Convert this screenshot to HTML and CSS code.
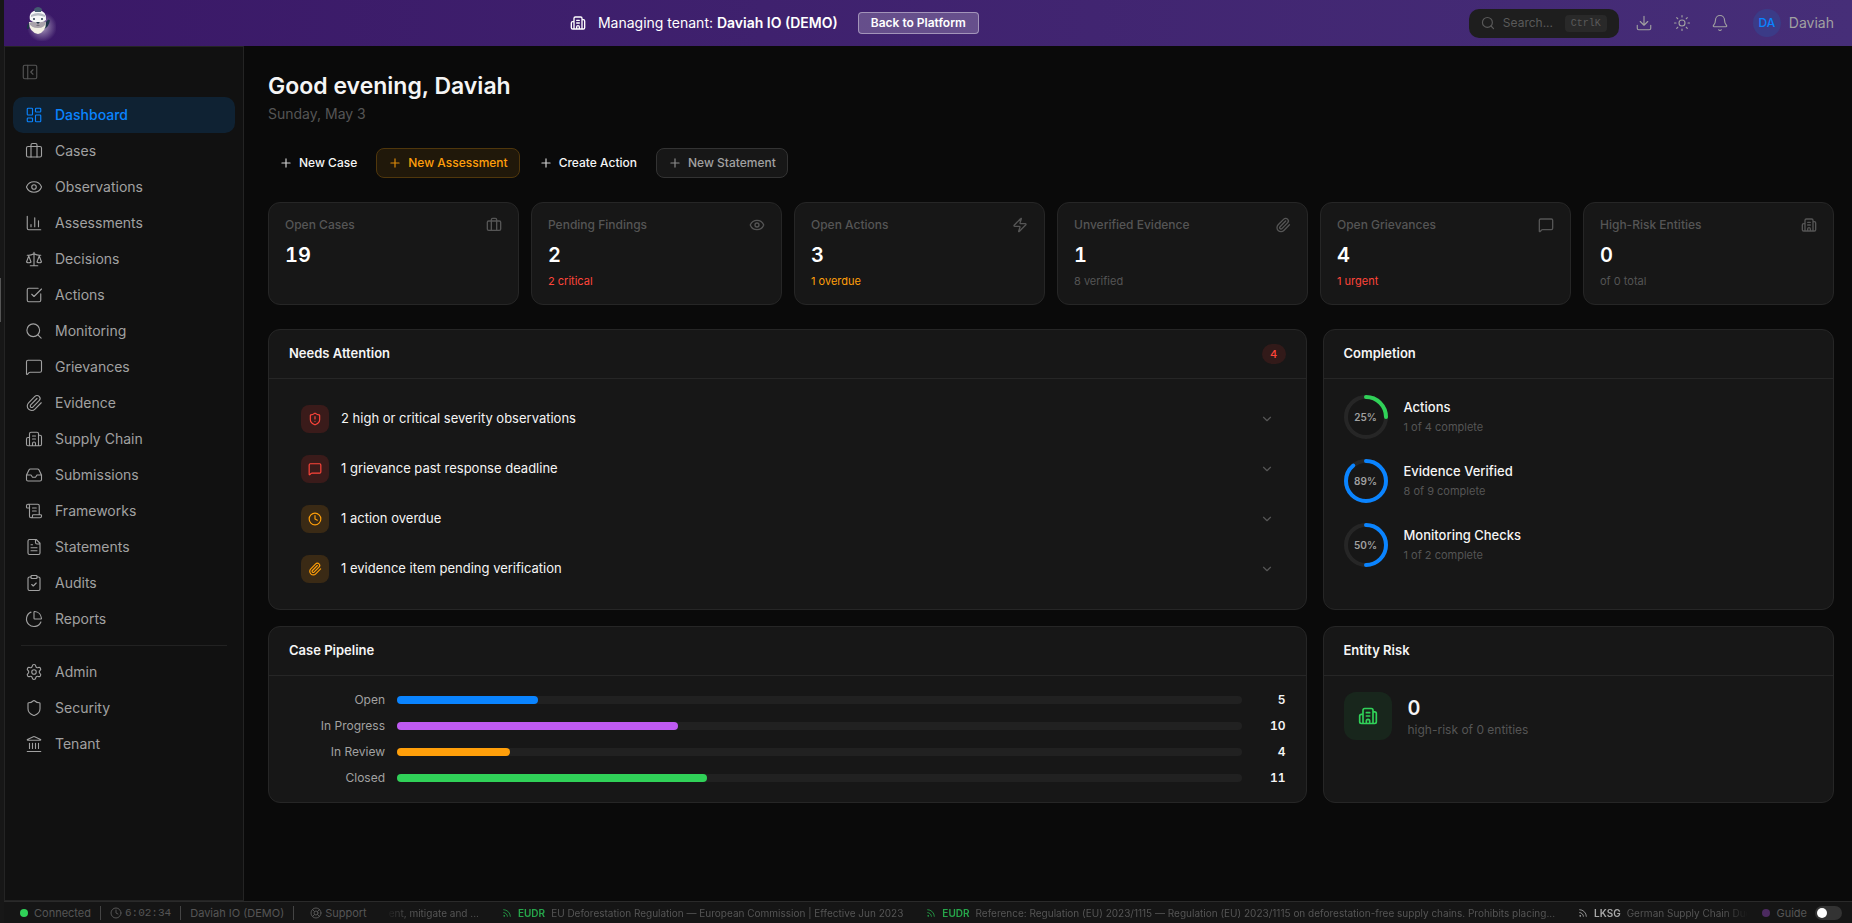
FILE: index.html
```
<!DOCTYPE html>
<html lang="en">
<head>
<meta charset="utf-8">
<title>Dashboard</title>
<link rel="stylesheet" href="styles.css">
</head>
<body>
<svg class="sprite" aria-hidden="true">
  <symbol id="dashboard" viewBox="0 0 24 24"><rect x="3" y="3" width="7" height="9" rx="1"/><rect x="14" y="3" width="7" height="5" rx="1"/><rect x="14" y="12" width="7" height="9" rx="1"/><rect x="3" y="16" width="7" height="5" rx="1"/></symbol>
  <symbol id="briefcase" viewBox="0 0 24 24"><path d="M16 20V4a2 2 0 0 0-2-2h-4a2 2 0 0 0-2 2v16"/><rect x="2" y="6" width="20" height="14" rx="2"/></symbol>
  <symbol id="eye" viewBox="0 0 24 24"><path d="M2.062 12.348a1 1 0 0 1 0-.696 10.75 10.75 0 0 1 19.876 0 1 1 0 0 1 0 .696 10.75 10.75 0 0 1-19.876 0"/><circle cx="12" cy="12" r="3"/></symbol>
  <symbol id="chart" viewBox="0 0 24 24"><path d="M3 3v16a2 2 0 0 0 2 2h16M18 17V9M13 17V5M8 17v-3"/></symbol>
  <symbol id="scale" viewBox="0 0 24 24"><path d="m16 16 3-8 3 8c-.87.65-1.92 1-3 1s-2.13-.35-3-1ZM2 16l3-8 3 8c-.87.65-1.92 1-3 1s-2.13-.35-3-1ZM7 21h10M12 3v18M3 7h2c2 0 5-1 7-2 2 1 5 2 7 2h2"/></symbol>
  <symbol id="check" viewBox="0 0 24 24"><path d="M21 10.5V19a2 2 0 0 1-2 2H5a2 2 0 0 1-2-2V5a2 2 0 0 1 2-2h12.5M9 11l3 3L22 4"/></symbol>
  <symbol id="search" viewBox="0 0 24 24"><circle cx="11" cy="11" r="8.500"/><path d="m21.500 21.500-4.300-4.300"/></symbol>
  <symbol id="message" viewBox="0 0 24 24"><path d="M22 17a2 2 0 0 1-2 2H6.828a2 2 0 0 0-1.414.586l-2.202 2.202A.71.71 0 0 1 2 21.286V5a2 2 0 0 1 2-2h16a2 2 0 0 1 2 2z"/></symbol>
  <symbol id="clip" viewBox="0 0 24 24"><path d="m16 6-8.414 8.586a2 2 0 0 0 2.829 2.829l8.414-8.586a4 4 0 1 0-5.657-5.657l-8.379 8.551a6 6 0 1 0 8.485 8.485l8.379-8.551"/></symbol>
  <symbol id="building" viewBox="0 0 24 24"><path d="M10 12h4M10 8h4M14 21v-3a2 2 0 0 0-4 0v3M6 10H4a2 2 0 0 0-2 2v7a2 2 0 0 0 2 2h16a2 2 0 0 0 2-2V9a2 2 0 0 0-2-2h-2M6 21V5a2 2 0 0 1 2-2h8a2 2 0 0 1 2 2v16"/></symbol>
  <symbol id="inbox" viewBox="0 0 24 24"><path d="M22 12h-6l-2 3h-4l-2-3H2M5.450 5.110 2 12v6a2 2 0 0 0 2 2h16a2 2 0 0 0 2-2v-6l-3.450-6.890A2 2 0 0 0 16.760 4H7.240a2 2 0 0 0-1.790 1.110z"/></symbol>
  <symbol id="scroll" viewBox="0 0 24 24"><path d="M15 12h-5M15 8h-5M19 17V5a2 2 0 0 0-2-2H4M8 21h12a2 2 0 0 0 2-2v-1a1 1 0 0 0-1-1H11a1 1 0 0 0-1 1v1a2 2 0 1 1-4 0V5a2 2 0 1 0-4 0v2a1 1 0 0 0 1 1h3"/></symbol>
  <symbol id="file" viewBox="0 0 24 24"><path d="M15 2H6a2 2 0 0 0-2 2v16a2 2 0 0 0 2 2h12a2 2 0 0 0 2-2V7ZM14 2v4a2 2 0 0 0 2 2h4M10 9H8M16 13H8M16 17H8"/></symbol>
  <symbol id="clipboard" viewBox="0 0 24 24"><rect x="8" y="2" width="8" height="4" rx="1"/><path d="M16 4h2a2 2 0 0 1 2 2v14a2 2 0 0 1-2 2H6a2 2 0 0 1-2-2V6a2 2 0 0 1 2-2h2M9 14l2 2 4-4"/></symbol>
  <symbol id="pie" viewBox="0 0 24 24"><path d="M21 12c.552 0 1.005-.449.950-.998a10 10 0 0 0-8.953-8.951c-.550-.055-.998.398-.998.950v8a1 1 0 0 0 1 1zM21.210 15.890A10 10 0 1 1 8 2.830"/></symbol>
  <symbol id="gear" viewBox="0 0 24 24"><path d="M9.671 4.136a2.340 2.340 0 0 1 4.659 0 2.340 2.340 0 0 0 3.319 1.915 2.340 2.340 0 0 1 2.330 4.033 2.340 2.340 0 0 0 0 3.831 2.340 2.340 0 0 1-2.330 4.033 2.340 2.340 0 0 0-3.319 1.915 2.340 2.340 0 0 1-4.659 0 2.340 2.340 0 0 0-3.320-1.915 2.340 2.340 0 0 1-2.330-4.033 2.340 2.340 0 0 0 0-3.831A2.340 2.340 0 0 1 6.350 6.051a2.340 2.340 0 0 0 3.319-1.915"/><circle cx="12" cy="12" r="3"/></symbol>
  <symbol id="shield" viewBox="0 0 24 24"><path d="M20 13c0 5-3.500 7.500-7.660 8.950a1 1 0 0 1-.670-.010C7.500 20.500 4 18 4 13V6a1 1 0 0 1 1-1c2 0 4.500-1.200 6.240-2.720a1.170 1.170 0 0 1 1.520 0C14.510 3.810 17 5 19 5a1 1 0 0 1 1 1z"/></symbol>
  <symbol id="shield-alert" viewBox="0 0 24 24"><path d="M20 13c0 5-3.500 7.500-7.660 8.950a1 1 0 0 1-.670-.010C7.500 20.500 4 18 4 13V6a1 1 0 0 1 1-1c2 0 4.500-1.200 6.240-2.720a1.170 1.170 0 0 1 1.520 0C14.510 3.810 17 5 19 5a1 1 0 0 1 1 1zM12 8v4M12 16h.010"/></symbol>
  <symbol id="landmark" viewBox="0 0 24 24"><path d="M10 18v-7M11.120 2.198a2 2 0 0 1 1.760.006l7.866 3.847c.476.233.310.949-.220.949H3.474c-.530 0-.695-.716-.220-.949zM14 18v-7M18 18v-7M3 22h18M6 18v-7"/></symbol>
  <symbol id="zap" viewBox="0 0 24 24"><path d="M4 14a1 1 0 0 1-.780-1.630l9.900-10.200a.5.5 0 0 1 .860.460l-1.920 6.020A1 1 0 0 0 13 10h7a1 1 0 0 1 .780 1.630l-9.900 10.200a.5.5 0 0 1-.860-.460l1.920-6.020A1 1 0 0 0 11 14z"/></symbol>
  <symbol id="clock" viewBox="0 0 24 24"><circle cx="12" cy="12" r="10"/><path d="M12 6v6l4 2"/></symbol>
  <symbol id="panel" viewBox="0 0 24 24"><rect x="3" y="3" width="18" height="18" rx="2"/><path d="M9 3v18M16 15l-3-3 3-3"/></symbol>
  <symbol id="download" viewBox="0 0 24 24"><path d="M12 15V3M21 15v4a2 2 0 0 1-2 2H5a2 2 0 0 1-2-2v-4M7 10l5 5 5-5"/></symbol>
  <symbol id="sun" viewBox="0 0 24 24"><circle cx="12" cy="12" r="4"/><path d="M12 2v2M12 20v2M4.930 4.930l1.410 1.410M17.660 17.660l1.410 1.410M2 12h2M20 12h2M6.340 17.660l-1.410 1.410M19.070 4.930l-1.410 1.410"/></symbol>
  <symbol id="bell" viewBox="0 0 24 24"><path d="M10.268 21a2 2 0 0 0 3.464 0M3.262 15.326A1 1 0 0 0 4 17h16a1 1 0 0 0 .740-1.673C19.410 13.956 18 12.499 18 8A6 6 0 0 0 6 8c0 4.499-1.411 5.956-2.738 7.326"/></symbol>
  <symbol id="plus" viewBox="0 0 24 24"><path d="M5 12h14M12 5v14"/></symbol>
  <symbol id="chevron" viewBox="0 0 24 24"><path d="m6 9 6 6 6-6"/></symbol>
  <symbol id="buoy" viewBox="0 0 24 24"><circle cx="12" cy="12" r="10"/><circle cx="12" cy="12" r="4"/><path d="m4.930 4.930 4.240 4.240M14.830 9.170l4.240-4.240M14.830 14.830l4.240 4.240M9.170 14.830l-4.240 4.240"/></symbol>
  <symbol id="rss" viewBox="0 0 24 24"><path d="M4 11a9 9 0 0 1 9 9M4 4a16 16 0 0 1 16 16"/><circle cx="5" cy="19" r="1"/></symbol>
</svg>

<div class="app">
  <div class="edge" aria-hidden="true"><span class="edge-thumb"></span></div>
  <div class="shell">
    <header class="topbar">
      <a class="logo" href="#" aria-label="Home">
        <svg width="32" height="36" viewBox="0 0 32 36" aria-hidden="true">
          <defs><radialGradient id="glow"><stop offset="0" stop-color="#fff" stop-opacity=".6"/><stop offset=".5" stop-color="#fff" stop-opacity=".28"/><stop offset="1" stop-color="#fff" stop-opacity="0"/></radialGradient></defs>
          <circle cx="18" cy="22" r="15" fill="url(#glow)"/>
          <path d="M4 24q-1-4 3-6M20 19q3-1 5-4-1 6-5 8z" fill="#1d3348" stroke="#1d3348" stroke-width="2"/>
          <path d="M5 17q0 10 9 12 8-2 8-12z" fill="#f3f0e4"/>
          <path d="M5 18q8-4 17-1-1 6-8 6t-9-5z" fill="#a9a2ab"/>
          <path d="M6 15q-2-9 8-10 9 1 8 10-4 3-8 2-4 1-8-2z" fill="#f6f7f8"/>
          <path d="M7 10q7-4 14 0v2q-7-3-14 0z" fill="#b7bcc4"/>
          <path d="M10 4q4-4 8 0l-1 3h-6z" fill="#445b70"/>
          <circle cx="10" cy="14" r="1" fill="#26394b"/><circle cx="18" cy="14" r="1" fill="#26394b"/>
          <path d="M12 17h4l-2 2z" fill="#26394b"/>
          <path d="M12 21q2-3 4 0z" fill="#77717b"/>
        </svg>
      </a>
      <div class="tenant">
        <svg class="icon s16"><use href="#building"/></svg>
        <span>Managing tenant: <strong>Daviah IO (DEMO)</strong></span>
        <button class="back" type="button">Back to Platform</button>
      </div>
      <div class="tools">
        <label class="search">
          <svg class="icon s14"><use href="#search"/></svg>
          <input type="text" placeholder="Search..." aria-label="Search">
          <kbd>CtrlK</kbd>
        </label>
        <button class="tool" type="button" aria-label="Download"><svg class="icon s18"><use href="#download"/></svg></button>
        <button class="tool" type="button" aria-label="Theme"><svg class="icon s18"><use href="#sun"/></svg></button>
        <button class="tool" type="button" aria-label="Notifications"><svg class="icon s18"><use href="#bell"/></svg></button>
        <button class="user" type="button"><span class="avatar">DA</span><span>Daviah</span></button>
      </div>
    </header>

    <div class="middle">
      <aside class="sidebar">
        <button class="collapse" type="button" aria-label="Collapse sidebar"><svg class="icon s18"><use href="#panel"/></svg></button>
        <nav class="nav">
          <a class="nav-item active" href="#"><svg class="icon s18"><use href="#dashboard"/></svg>Dashboard</a>
          <a class="nav-item" href="#"><svg class="icon s18"><use href="#briefcase"/></svg>Cases</a>
          <a class="nav-item" href="#"><svg class="icon s18"><use href="#eye"/></svg>Observations</a>
          <a class="nav-item" href="#"><svg class="icon s18"><use href="#chart"/></svg>Assessments</a>
          <a class="nav-item" href="#"><svg class="icon s18"><use href="#scale"/></svg>Decisions</a>
          <a class="nav-item" href="#"><svg class="icon s18"><use href="#check"/></svg>Actions</a>
          <a class="nav-item" href="#"><svg class="icon s18"><use href="#search"/></svg>Monitoring</a>
          <a class="nav-item" href="#"><svg class="icon s18"><use href="#message"/></svg>Grievances</a>
          <a class="nav-item" href="#"><svg class="icon s18"><use href="#clip"/></svg>Evidence</a>
          <a class="nav-item" href="#"><svg class="icon s18"><use href="#building"/></svg>Supply Chain</a>
          <a class="nav-item" href="#"><svg class="icon s18"><use href="#inbox"/></svg>Submissions</a>
          <a class="nav-item" href="#"><svg class="icon s18"><use href="#scroll"/></svg>Frameworks</a>
          <a class="nav-item" href="#"><svg class="icon s18"><use href="#file"/></svg>Statements</a>
          <a class="nav-item" href="#"><svg class="icon s18"><use href="#clipboard"/></svg>Audits</a>
          <a class="nav-item" href="#"><svg class="icon s18"><use href="#pie"/></svg>Reports</a>
          <hr class="nav-rule">
          <a class="nav-item" href="#"><svg class="icon s18"><use href="#gear"/></svg>Admin</a>
          <a class="nav-item" href="#"><svg class="icon s18"><use href="#shield"/></svg>Security</a>
          <a class="nav-item" href="#"><svg class="icon s18"><use href="#landmark"/></svg>Tenant</a>
        </nav>
      </aside>

      <main class="content">
        <div class="greeting">
          <h1>Good evening, Daviah</h1>
          <p>Sunday, May 3</p>
        </div>

        <div class="actions">
          <button class="action" type="button"><svg class="icon s14"><use href="#plus"/></svg>New Case</button>
          <button class="action amber" type="button"><svg class="icon s14"><use href="#plus"/></svg>New Assessment</button>
          <button class="action" type="button"><svg class="icon s14"><use href="#plus"/></svg>Create Action</button>
          <button class="action outline" type="button"><svg class="icon s14"><use href="#plus"/></svg>New Statement</button>
        </div>

        <section class="stats">
          <article class="stat"><div class="stat-head">Open Cases<svg class="icon s16"><use href="#briefcase"/></svg></div><div class="stat-value">19</div></article>
          <article class="stat"><div class="stat-head">Pending Findings<svg class="icon s16"><use href="#eye"/></svg></div><div class="stat-value">2</div><div class="stat-sub red">2 critical</div></article>
          <article class="stat"><div class="stat-head">Open Actions<svg class="icon s16"><use href="#zap"/></svg></div><div class="stat-value">3</div><div class="stat-sub orange">1 overdue</div></article>
          <article class="stat"><div class="stat-head">Unverified Evidence<svg class="icon s16"><use href="#clip"/></svg></div><div class="stat-value">1</div><div class="stat-sub">8 verified</div></article>
          <article class="stat"><div class="stat-head">Open Grievances<svg class="icon s16"><use href="#message"/></svg></div><div class="stat-value">4</div><div class="stat-sub red">1 urgent</div></article>
          <article class="stat"><div class="stat-head">High-Risk Entities<svg class="icon s16"><use href="#building"/></svg></div><div class="stat-value">0</div><div class="stat-sub">of 0 total</div></article>
        </section>

        <div class="panels">
          <section class="panel">
            <header class="panel-head"><h2>Needs Attention</h2><span class="badge">4</span></header>
            <div class="panel-body alerts">
              <button class="alert" type="button"><span class="alert-icon red"><svg class="icon s14"><use href="#shield-alert"/></svg></span><span class="alert-text">2 high or critical severity observations</span><svg class="icon s14 chev"><use href="#chevron"/></svg></button>
              <button class="alert" type="button"><span class="alert-icon red"><svg class="icon s14"><use href="#message"/></svg></span><span class="alert-text">1 grievance past response deadline</span><svg class="icon s14 chev"><use href="#chevron"/></svg></button>
              <button class="alert" type="button"><span class="alert-icon orange"><svg class="icon s14"><use href="#clock"/></svg></span><span class="alert-text">1 action overdue</span><svg class="icon s14 chev"><use href="#chevron"/></svg></button>
              <button class="alert" type="button"><span class="alert-icon orange"><svg class="icon s14"><use href="#clip"/></svg></span><span class="alert-text">1 evidence item pending verification</span><svg class="icon s14 chev"><use href="#chevron"/></svg></button>
            </div>
          </section>

          <section class="panel">
            <header class="panel-head"><h2>Completion</h2></header>
            <div class="panel-body rings">
              <div class="ring-row">
                <div class="ring"><svg viewBox="0 0 44 44"><circle class="track" cx="22" cy="22" r="20"/><circle class="arc green" cx="22" cy="22" r="20" pathLength="100" stroke-dasharray="25 100"/></svg><span>25%</span></div>
                <div><h3>Actions</h3><p>1 of 4 complete</p></div>
              </div>
              <div class="ring-row">
                <div class="ring"><svg viewBox="0 0 44 44"><circle class="track" cx="22" cy="22" r="20"/><circle class="arc blue" cx="22" cy="22" r="20" pathLength="100" stroke-dasharray="89 100"/></svg><span>89%</span></div>
                <div><h3>Evidence Verified</h3><p>8 of 9 complete</p></div>
              </div>
              <div class="ring-row">
                <div class="ring"><svg viewBox="0 0 44 44"><circle class="track" cx="22" cy="22" r="20"/><circle class="arc blue" cx="22" cy="22" r="20" pathLength="100" stroke-dasharray="50 100"/></svg><span>50%</span></div>
                <div><h3>Monitoring Checks</h3><p>1 of 2 complete</p></div>
              </div>
            </div>
          </section>

          <section class="panel">
            <header class="panel-head"><h2>Case Pipeline</h2></header>
            <div class="panel-body pipeline">
              <div class="pipe"><span class="pipe-label">Open</span><div class="bar"><div class="fill blue" style="width:16.670%"></div></div><span class="pipe-count">5</span></div>
              <div class="pipe"><span class="pipe-label">In Progress</span><div class="bar"><div class="fill purple" style="width:33.330%"></div></div><span class="pipe-count">10</span></div>
              <div class="pipe"><span class="pipe-label">In Review</span><div class="bar"><div class="fill orange" style="width:13.330%"></div></div><span class="pipe-count">4</span></div>
              <div class="pipe"><span class="pipe-label">Closed</span><div class="bar"><div class="fill green" style="width:36.670%"></div></div><span class="pipe-count">11</span></div>
            </div>
          </section>

          <section class="panel">
            <header class="panel-head"><h2>Entity Risk</h2></header>
            <div class="panel-body entity">
              <span class="entity-icon"><svg class="icon s20"><use href="#building"/></svg></span>
              <div><div class="entity-value">0</div><p class="entity-sub">high-risk of 0 entities</p></div>
            </div>
          </section>
        </div>
      </main>
    </div>

    <footer class="status">
      <span class="status-item conn"><i class="dot"></i>Connected</span>
      <span class="status-item"><svg class="icon s12"><use href="#clock"/></svg><time>6:02:34</time></span>
      <span class="status-item">Daviah IO (DEMO)</span>
      <a class="status-item support" href="#"><svg class="icon s12"><use href="#buoy"/></svg>Support</a>
      <div class="ticker">
        <span class="news">ent, mitigate and ...</span>
        <span class="news"><svg class="icon s10 eudr"><use href="#rss"/></svg><b class="eudr">EUDR</b>EU Deforestation Regulation — European Commission | Effective Jun 2023</span>
        <span class="news"><svg class="icon s10 eudr"><use href="#rss"/></svg><b class="eudr">EUDR</b>Reference: Regulation (EU) 2023/1115 — Regulation (EU) 2023/1115 on deforestation-free supply chains. Prohibits placing...</span>
        <span class="news"><svg class="icon s10 lksg"><use href="#rss"/></svg><b class="lksg">LKSG</b>German Supply Chain Due</span>
      </div>
      <label class="guide"><i class="dot violet"></i>Guide<input type="checkbox" class="toggle"></label>
    </footer>
  </div>
</div>
</body>
</html>
```

FILE: styles.css
```
* { box-sizing: border-box; }

body {
  margin: 0;
  background: #0a0a0a;
  color: #f5f5f5;
  font-family: Inter, "Liberation Sans", sans-serif;
  font-size: 13px;
  line-height: 20px;
}

h1, h2, h3, p { margin: 0; }
button { font: inherit; color: inherit; background: none; border: 0; padding: 0; margin: 0; }
a { color: inherit; text-decoration: none; }

.sprite { display: none; }
.icon { fill: none; stroke: currentColor; stroke-width: 2; stroke-linecap: round; stroke-linejoin: round; flex: none; }
.s10 { width: 10px; height: 10px; }
.s12 { width: 12px; height: 12px; }
.s14 { width: 14px; height: 14px; }
.s16 { width: 16px; height: 16px; }
.s18 { width: 18px; height: 18px; stroke-width: 1.5; }
.s20 { width: 20px; height: 20px; }

.app { display: flex; height: 100vh; }
.edge { width: 4px; flex: none; background: #171717; padding-top: 278px; }
.edge-thumb { display: block; width: 1px; height: 44px; background: #555; }
.shell { flex: 1; min-width: 0; display: flex; flex-direction: column; }

.topbar {
  flex: none;
  height: 46px;
  display: flex;
  justify-content: space-between;
  align-items: center;
  background: linear-gradient(90deg, #3a1867, #462e78);
}
.logo { display: flex; width: 76px; padding-left: 20px; }
.tenant { display: flex; align-items: center; gap: 12px; font-size: 14px; color: #fff; }
.tenant strong { font-weight: 600; }
.back {
  margin-left: 8px;
  height: 22px;
  padding: 0 12px;
  border: 1px solid rgba(255, 255, 255, .4);
  border-radius: 4px;
  background: rgba(255, 255, 255, .2);
  color: #fff;
  font-size: 12px;
  font-weight: 600;
}
.tools { display: flex; justify-content: flex-end; align-items: center; gap: 20px; padding-right: 18px; color: #a1a1a1; }
.search {
  display: flex;
  align-items: center;
  gap: 8px;
  width: 150px;
  height: 29px;
  margin-right: -4px;
  padding: 0 12px;
  border-radius: 10px;
  background: #1e1e1e;
  color: #5a5a5a;
  font-size: 12px;
}
.search input { flex: 1; min-width: 0; padding: 0; border: 0; outline: 0; background: none; font: inherit; color: inherit; }
.search input::placeholder { color: #5a5a5a; }
.search kbd { padding: 0 6px; border-radius: 4px; background: #292929; font: 10px/17px "Liberation Mono", monospace; color: #5a5a5a; }
.tool { display: flex; }
.user { display: flex; align-items: center; gap: 8px; margin-left: 4px; font-size: 14px; }
.avatar { width: 28px; height: 28px; border-radius: 50%; background: #3b3b87; color: #0a84ff; font-size: 12px; font-weight: 500; line-height: 28px; text-align: center; }

.middle { flex: 1; min-height: 0; display: flex; }

.sidebar { width: 240px; flex: none; padding: 16px 8px 0; border: 1px solid #242424; background: #111; }
.collapse { display: flex; padding: 0 8px; color: #555; }
.nav { display: flex; flex-direction: column; padding-top: 16px; }
.nav-item { display: flex; align-items: center; gap: 12px; height: 36px; padding: 0 12px; border-radius: 10px; color: #a1a1a1; font-size: 14px; }
.nav-item.active { background: #0f2233; color: #0a84ff; font-weight: 500; }
.nav-rule { align-self: stretch; height: 1px; margin: 8px; border: 0; background: #222; }

.content { flex: 1; min-width: 0; overflow: hidden; padding: 24px 18px 24px 24px; }
.greeting h1 { font-size: 23px; line-height: 32px; font-weight: 600; }
.greeting p { margin-top: 2px; font-size: 14px; line-height: 20px; color: #555; }

.actions { display: flex; gap: 8px; margin-top: 24px; }
.action { display: flex; align-items: center; gap: 6px; height: 30px; padding: 0 11px; border-radius: 8px; font-size: 12px; font-weight: 500; }
.action.amber { color: #ff9f0a; background: #20180a; border: 1px solid #50370c; }
.action.outline { color: #a1a1a1; background: #171717; border: 1px solid #333; }
.action .icon { opacity: .85; }

.stats { display: grid; grid-template-columns: repeat(6, 1fr); gap: 12px; margin-top: 24px; }
.stat { min-height: 103px; padding: 13px 16px; border: 1px solid #262626; border-radius: 12px; background: #171717; }
.stat-head { display: flex; align-items: center; justify-content: space-between; font-size: 12px; line-height: 18px; font-weight: 500; color: #555; }
.stat-value { margin-top: 7px; font-size: 20px; line-height: 28px; font-weight: 600; font-variant-numeric: tabular-nums; color: #fff; }
.stat-sub { margin-top: 3px; font-size: 11px; line-height: 18px; color: #555; }
.stat-sub.red { color: #ff453a; }
.stat-sub.orange { color: #ff9f0a; }

.panels { display: grid; grid-template-columns: minmax(0, 67fr) minmax(0, 33fr); gap: 16px; margin-top: 24px; }
.panel { border: 1px solid #262626; border-radius: 12px; background: #171717; }
.panel-head { display: flex; align-items: center; justify-content: space-between; padding: 14px 20px; border-bottom: 1px solid #262626; }
.panel-head h2 { font-size: 13px; line-height: 1.5; font-weight: 600; }
.panel-body { padding: 16px 20px; }
.badge { min-width: 24px; padding: 0 8px; border-radius: 10px; background: #321a19; color: #ff453a; font-size: 11px; font-weight: 500; text-align: center; }

.alerts { display: flex; flex-direction: column; gap: 2px; }
.alert { display: flex; align-items: center; gap: 12px; padding: 10px 12px; text-align: left; }
.alert-text { flex: 1; line-height: 1.5; }
.alert-icon { display: flex; align-items: center; justify-content: center; width: 28px; height: 28px; border-radius: 8px; }
.alert-icon.red { background: #3a1b1a; color: #ff453a; }
.alert-icon.orange { background: #3a2a15; color: #ff9f0a; }
.chev { color: #555; }

.rings { display: flex; flex-direction: column; gap: 20px; }
.ring-row { display: flex; align-items: center; gap: 16px; }
.ring { display: grid; width: 44px; height: 44px; }
.ring svg, .ring span { grid-area: 1 / 1; }
.ring svg { transform: rotate(-90deg); }
.ring span { place-self: center; font-size: 10px; font-weight: 600; color: #a1a1a1; }
.ring circle { fill: none; stroke-width: 4; }
.track { stroke: #262626; }
.arc { stroke-linecap: round; }
.arc.green { stroke: #30d158; }
.arc.blue { stroke: #0a84ff; }
.ring-row h3 { font-size: 13px; line-height: 18px; font-weight: 500; }
.ring-row p { margin-top: 2px; font-size: 11px; line-height: 18px; color: #555; }

.pipeline { display: flex; flex-direction: column; gap: 10px; }
.pipe { display: grid; grid-template-columns: 96px 1fr 32px; align-items: center; gap: 12px; font-size: 12px; line-height: 16px; }
.pipe-label { text-align: right; color: #a1a1a1; }
.pipe-count { text-align: right; font-weight: 600; font-variant-numeric: tabular-nums; }
.bar { height: 8px; border-radius: 4px; background: #212121; }
.fill { height: 8px; border-radius: 4px; }
.fill.blue { background: #0a84ff; }
.fill.purple { background: #bf5af2; }
.fill.orange { background: #ff9f0a; }
.fill.green { background: #30d158; }

.entity { display: flex; gap: 16px; align-items: center; }
.entity-icon { display: flex; align-items: center; justify-content: center; width: 48px; height: 48px; border-radius: 12px; background: #18261c; color: #30d158; }
.entity-value { font-size: 20px; line-height: 28px; font-weight: 600; font-variant-numeric: tabular-nums; }
.entity-sub { font-size: 12px; line-height: 16px; color: #555; }
.panel-body.entity { padding-bottom: 16px; }

.status { flex: none; display: flex; align-items: center; height: 22px; padding: 1px 10px 0 16px; border-top: 1px solid #2a2a2a; background: #151515; color: #555; font-size: 11px; line-height: 14px; }
.status-item { display: flex; align-items: center; gap: 3px; padding-right: 9px; margin-right: 9px; border-right: 1px solid #444; white-space: nowrap; }
.status-item.conn { gap: 6px; }
.status-item.support { padding-left: 7px; border-right: 0; }
.status time { font-family: "Liberation Mono", monospace; }
.dot { width: 8px; height: 8px; border-radius: 50%; background: #30d158; }
.dot.violet { background: #4c2a60; }
.ticker {
  flex: 1;
  min-width: 0;
  display: flex;
  gap: 23px;
  padding-left: 4px;
  overflow: hidden;
  font-size: 10px;
  -webkit-mask-image: linear-gradient(90deg, transparent, #000 24px, #000 calc(100% - 24px), transparent);
  mask-image: linear-gradient(90deg, transparent, #000 24px, #000 calc(100% - 24px), transparent);
}
.news { display: flex; align-items: center; gap: 6px; white-space: nowrap; }
.news b { font-weight: 600; }
.eudr { color: #26a64a; }
.lksg { color: #a8a8a8; }
.guide { display: flex; align-items: center; gap: 6px; margin-left: 14px; }
.toggle { appearance: none; display: flex; align-items: center; width: 27px; height: 14px; margin: 0 0 0 2px; padding: 0 2px; border-radius: 7px; background: #333; }
.toggle::before { content: ""; width: 10px; height: 10px; border-radius: 50%; background: #fff; }
```
